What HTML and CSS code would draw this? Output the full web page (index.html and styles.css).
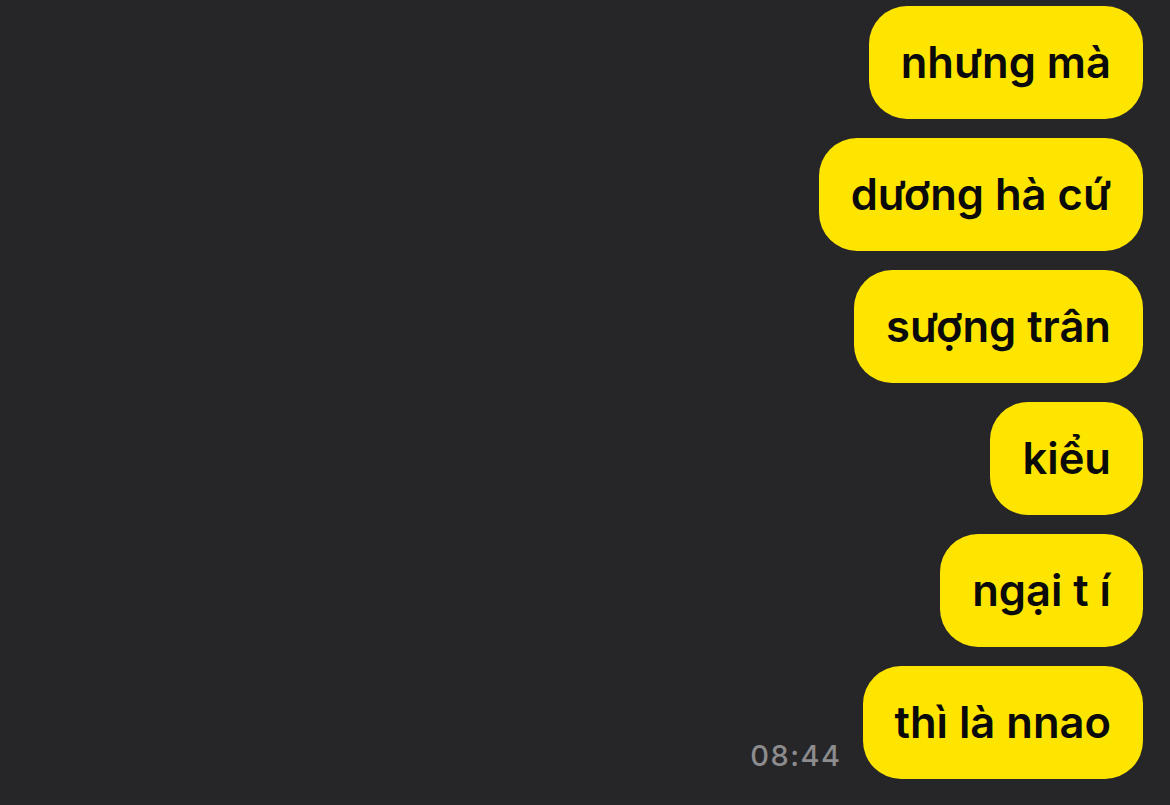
FILE: index.html
```html
<!DOCTYPE html>
<html>
<head>
    <meta charset="UTF-8">
    <meta name="viewport" content="width=device-width, initial-scale=1.0">
    <title>Chat</title>
    <link rel="stylesheet" href="styles.css">
</head>
<body>
    <div class="chat">
        <div class="row"><div class="bubble">nhưng mà</div></div>
        <div class="row"><div class="bubble">dương hà cứ</div></div>
        <div class="row"><div class="bubble">sượng trân</div></div>
        <div class="row"><div class="bubble">kiểu</div></div>
        <div class="row"><div class="bubble">ngại t í</div></div>
        <div class="row">
            <span class="time">08:44</span>
            <div class="bubble">thì là nnao</div>
        </div>
    </div>
</body>
</html>
```

FILE: styles.css
```css
* {
    margin: 0;
    padding: 0;
    box-sizing: border-box;
}

body {
    background: #262628;
    font-family: Inter, 'Noto Sans', sans-serif;
    height: 805px;
    overflow: hidden;
}

.chat {
    display: flex;
    flex-direction: column;
    align-items: flex-end;
    gap: 19px;
    padding: 6px 27px 0 0;
}

.row {
    display: flex;
    align-items: flex-end;
    gap: 21px;
}

.bubble {
    background: #fee500;
    color: #0a0a0a;
    font-size: 43.5px;
    font-weight: 600;
    line-height: 53px;
    padding: 30px 32px;
    border-radius: 38px;
    white-space: nowrap;
}

.time {
    color: #8c8c8e;
    font-size: 29px;
    font-weight: 500;
    letter-spacing: 1.5px;
    line-height: 34px;
    margin-bottom: 6px;
}
```
